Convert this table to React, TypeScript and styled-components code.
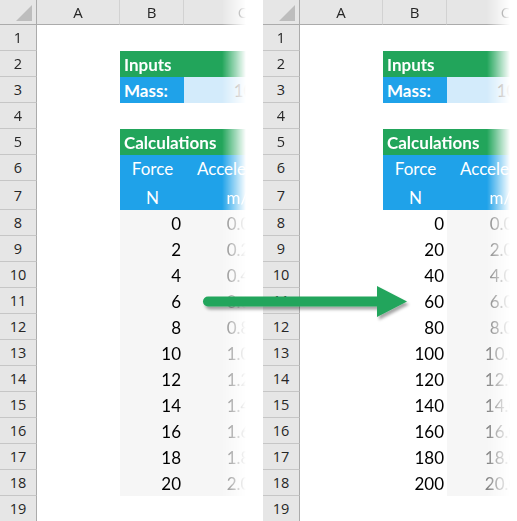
import React from "react";
import styled, { createGlobalStyle, css } from "styled-components";

const GREEN = "#22a55b";
const BLUE = "#1fa2e9";
const PALE = "#d3ebfb";
const SHADE = "#f6f6f6";
const HEAD_BG = "#e6e6e6";

const GlobalStyle = createGlobalStyle`
  html, body { margin: 0; padding: 0; background: #ffffff; }
  body { font-family: Lato, "Open Sans", sans-serif; }
`;

const Stage = styled.div`
  position: relative;
  display: flex;
  gap: 17px;
  width: 517px;
  height: 521px;
  overflow: hidden;
  background: #ffffff;
`;

const Sheet = styled.div<{ $width: number; $fade: number }>`
  flex: none;
  width: ${(p) => p.$width}px;
  height: 521px;
  overflow: hidden;
  display: grid;
  grid-template-columns: 37px 83px 64px 118px;
  grid-template-rows: 25px repeat(6, 26px) 29px repeat(12, 26px);
  align-content: start;
  justify-content: start;
  -webkit-mask-image: linear-gradient(to right, #000 ${(p) => p.$fade}px, transparent ${(p) => p.$width}px);
  mask-image: linear-gradient(to right, #000 ${(p) => p.$fade}px, transparent ${(p) => p.$width}px);
`;

const Corner = styled.div`
  position: relative;
  background: ${HEAD_BG};
  border-right: 1px solid #ababab;
  border-bottom: 1px solid #ababab;
  &::after {
    content: "";
    position: absolute;
    right: 4px;
    bottom: 3px;
    width: 0;
    height: 0;
    border-left: 16px solid transparent;
    border-bottom: 16px solid #bdbdbd;
  }
`;

const ColHead = styled.div`
  display: flex;
  align-items: center;
  justify-content: center;
  background: ${HEAD_BG};
  border-bottom: 1px solid #ababab;
  border-right: 1px solid #d2d2d2;
  font-family: "Open Sans", sans-serif;
  font-size: 15px;
  color: #262626;
`;

const RowHead = styled.div`
  display: flex;
  align-items: center;
  justify-content: center;
  background: ${HEAD_BG};
  border-right: 1px solid #ababab;
  border-bottom: 1px solid #c6c6c6;
  font-family: "Open Sans", sans-serif;
  font-size: 14.5px;
  color: #262626;
`;

type Tone = "plain" | "green" | "blue" | "pale" | "shade";
type Align = "left" | "center" | "right";

const toneBg: Record<Tone, string> = {
  plain: "#ffffff",
  green: GREEN,
  blue: BLUE,
  pale: PALE,
  shade: SHADE,
};

const Cell = styled.div<{ $tone?: Tone; $align?: Align; $bold?: boolean; $span?: number; $muted?: boolean }>`
  display: flex;
  align-items: flex-end;
  justify-content: ${(p) => (p.$align === "right" ? "flex-end" : p.$align === "center" ? "center" : "flex-start")};
  padding: 0 3px 2px 4px;
  grid-column: span ${(p) => p.$span ?? 1};
  background: ${(p) => toneBg[p.$tone ?? "plain"]};
  color: ${(p) => (p.$tone === "green" || p.$tone === "blue" ? "#ffffff" : p.$muted ? "#808080" : "#000000")};
  font-family: Lato, sans-serif;
  font-size: 17px;
  line-height: 20px;
  white-space: nowrap;
  overflow: hidden;
  ${(p) =>
    p.$bold &&
    css`
      font-weight: 700;
    `}
`;

const Overlay = styled.svg`
  position: absolute;
  left: 0;
  top: 0;
  pointer-events: none;
`;

type SheetProps = { step: number; shadeB: boolean; width: number; fade: number };

function Spreadsheet({ step, shadeB, width, fade }: SheetProps) {
  const values = Array.from({ length: 11 }, (_, i) => i * step);
  return (
    <Sheet $width={width} $fade={fade}>
      <Corner />
      <ColHead>A</ColHead>
      <ColHead>B</ColHead>
      <ColHead>C</ColHead>

      <RowHead>1</RowHead>
      <Cell />
      <Cell />
      <Cell />

      <RowHead>2</RowHead>
      <Cell />
      <Cell $tone="green" $bold $span={2}>Inputs</Cell>

      <RowHead>3</RowHead>
      <Cell />
      <Cell $tone="blue" $bold>Mass:</Cell>
      <Cell $tone="pale" $align="center" $muted>10</Cell>

      <RowHead>4</RowHead>
      <Cell />
      <Cell />
      <Cell />

      <RowHead>5</RowHead>
      <Cell />
      <Cell $tone="green" $bold $span={2}>Calculations</Cell>

      <RowHead>6</RowHead>
      <Cell />
      <Cell $tone="blue" $align="center">Force</Cell>
      <Cell $tone="blue" $align="center">Acceleration</Cell>

      <RowHead>7</RowHead>
      <Cell />
      <Cell $tone="blue" $align="center">N</Cell>
      <Cell $tone="blue" $align="center">m/s²</Cell>

      {values.map((v, i) => (
        <React.Fragment key={v}>
          <RowHead>{i + 8}</RowHead>
          <Cell />
          <Cell $tone={shadeB ? "shade" : "plain"} $align="right">{v}</Cell>
          <Cell $tone="shade" $align="center" $muted>{(v / 10).toFixed(2)}</Cell>
        </React.Fragment>
      ))}

      <RowHead>19</RowHead>
      <Cell />
      <Cell />
      <Cell />
    </Sheet>
  );
}

export default function App() {
  return (
    <>
      <GlobalStyle />
      <Stage>
        <Spreadsheet step={2} shadeB width={246} fade={222} />
        <Spreadsheet step={20} shadeB={false} width={247} fade={224} />
        <Overlay width={517} height={521} viewBox="0 0 517 521">
          <defs>
            <filter id="arrowShadow" x="-10%" y="-60%" width="120%" height="220%">
              <feDropShadow dx="2" dy="3" stdDeviation="1.6" floodColor="#000" floodOpacity="0.35" />
            </filter>
          </defs>
          <g filter="url(#arrowShadow)">
            <line x1="208" y1="301.5" x2="382" y2="301.5" stroke={GREEN} strokeWidth="10" strokeLinecap="round" />
            <polygon points="377,286 407,301.5 377,317" fill={GREEN} />
          </g>
        </Overlay>
      </Stage>
    </>
  );
}
